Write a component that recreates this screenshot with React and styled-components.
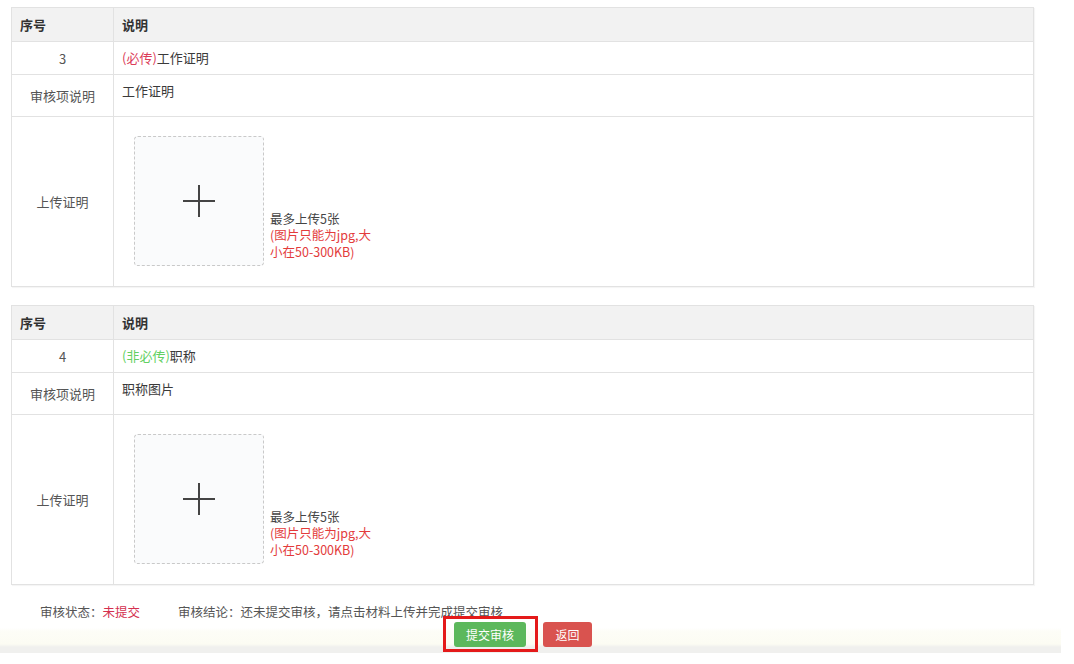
import React from "react";
import styled, { createGlobalStyle } from "styled-components";

const Global = createGlobalStyle`
  html, body { margin: 0; padding: 0; background: #fff; }
  body {
    font-family: "Microsoft YaHei", "Noto Sans CJK SC", "Noto Sans", sans-serif;
    font-size: 13px;
    color: #333;
  }
`;

const Page = styled.div`
  width: 1074px;
  height: 664px;
  padding-top: 7px;
  box-sizing: border-box;
  overflow: hidden;
`;

const Table = styled.table`
  margin-left: 11px;
  margin-top: ${(p) => p.$gap || 0}px;
  width: 1023px;
  border-collapse: collapse;
  table-layout: fixed;
  border: 1px solid #dedede;
  box-shadow: 1px 1px 1px rgba(0, 0, 0, 0.04);
`;

const Row = styled.tr`
  height: ${(p) => p.$h}px;
`;

const HeadCell = styled.th`
  background: #f2f2f2;
  border: 1px solid #e2e2e2;
  text-align: left;
  font-weight: bold;
  font-size: 13px;
  color: #333;
  padding: 0 8px;
  width: ${(p) => (p.$w ? `${p.$w}px` : "auto")};
  box-sizing: border-box;
`;

const LabelCell = styled.td`
  border: 1px solid #e2e2e2;
  text-align: center;
  vertical-align: middle;
  color: #555;
  font-size: 13px;
  padding: 0 4px;
`;

const Cell = styled.td`
  border: 1px solid #e2e2e2;
  text-align: left;
  vertical-align: ${(p) => p.$valign || "middle"};
  padding: ${(p) => p.$pad || "0 8px"};
  color: #3a3a3a;
  font-size: 13px;
  line-height: 16px;
`;

const Tag = styled.span`
  color: ${(p) => (p.$required ? "#dc3c58" : "#62d062")};
`;

const UploadWrap = styled.div`
  display: flex;
  align-items: flex-end;
  gap: 6px;
`;

const UploadBox = styled.div`
  width: 130px;
  height: 130px;
  box-sizing: border-box;
  border: 1px dashed #c9c9c9;
  border-radius: 4px;
  background: #fafbfc;
  display: flex;
  align-items: center;
  justify-content: center;
  cursor: pointer;
`;

const Hint = styled.div`
  display: flex;
  flex-direction: column;
  font-size: 12.5px;
  padding-bottom: 6px;
  white-space: nowrap;
`;

const HintLine = styled.div`
  height: 16.5px;
  line-height: 16.5px;
  color: ${(p) => (p.$red ? "#e33b3b" : "#444")};
`;

const StatusRow = styled.div`
  margin-top: 21px;
  padding-left: 40px;
  display: flex;
  gap: 38px;
  font-size: 12.5px;
  line-height: 12px;
  color: #555;
`;

const Accent = styled.span`
  color: #d4304f;
`;

const ButtonRow = styled.div`
  margin-top: -2px;
  width: 1061px;
  height: 37px;
  padding-left: 443px;
  box-sizing: border-box;
  display: flex;
  align-items: flex-start;
  gap: 5px;
  background: linear-gradient(
    to bottom,
    #ffffff 0px,
    #ffffff 12px,
    #fdfdf7 15px,
    #fcfcf3 28px,
    #f0f0ee 31px,
    #f0f0ee 37px
  );
`;

const Highlight = styled.span`
  display: inline-flex;
  border: 3px solid #e41a1a;
  padding: 3px 9px 2px 8px;
`;

const Button = styled.button`
  height: 25px;
  padding: 0;
  width: ${(p) => p.$w}px;
  margin-top: ${(p) => p.$mt || 0}px;
  border: none;
  border-radius: 3px;
  background: ${(p) => p.$bg};
  color: #fff;
  font-family: inherit;
  font-size: 12px;
  cursor: pointer;
`;

const Plus = () => (
  <svg width="34" height="34" viewBox="0 0 34 34">
    <path d="M17 1v32M1 17h32" stroke="#444" strokeWidth="2" fill="none" />
  </svg>
);

const Section = ({ no, required, title, desc, gap }) => (
  <Table $gap={gap}>
    <thead>
      <Row $h={34}>
        <HeadCell $w={102}>序号</HeadCell>
        <HeadCell>说明</HeadCell>
      </Row>
    </thead>
    <tbody>
      <Row $h={33}>
        <LabelCell>{no}</LabelCell>
        <Cell>
          <Tag $required={required}>{required ? "(必传)" : "(非必传)"}</Tag>
          {title}
        </Cell>
      </Row>
      <Row $h={42}>
        <LabelCell>审核项说明</LabelCell>
        <Cell $valign="top" $pad="8px 8px 0">
          {desc}
        </Cell>
      </Row>
      <Row $h={170}>
        <LabelCell>上传证明</LabelCell>
        <Cell $valign="top" $pad="19px 20px 0">
          <UploadWrap>
            <UploadBox>
              <Plus />
            </UploadBox>
            <Hint>
              <HintLine>最多上传5张</HintLine>
              <HintLine $red>(图片只能为jpg,大</HintLine>
              <HintLine $red>小在50-300KB)</HintLine>
            </Hint>
          </UploadWrap>
        </Cell>
      </Row>
    </tbody>
  </Table>
);

export default function App() {
  return (
    <Page>
      <Global />
      <Section no="3" required title="工作证明" desc="工作证明" />
      <Section no="4" required={false} title="职称" desc="职称图片" gap={18} />
      <StatusRow>
        <span>
          审核状态：<Accent>未提交</Accent>
        </span>
        <span>审核结论：还未提交审核，请点击材料上传并完成提交审核</span>
      </StatusRow>
      <ButtonRow>
        <Highlight>
          <Button $w={72} $bg="#5cb85c">
            提交审核
          </Button>
        </Highlight>
        <Button $w={49} $mt={6} $bg="#d9534f">
          返回
        </Button>
      </ButtonRow>
    </Page>
  );
}
